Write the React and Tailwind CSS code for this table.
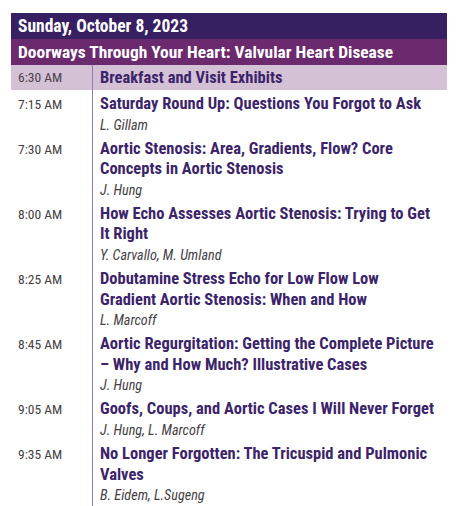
const sessions = [
  {
    time: '7:15 AM',
    title: ['Saturday Round Up: Questions You Forgot to Ask'],
    speakers: 'L. Gillam',
  },
  {
    time: '7:30 AM',
    title: ['Aortic Stenosis: Area, Gradients, Flow? Core', 'Concepts in Aortic Stenosis'],
    speakers: 'J. Hung',
  },
  {
    time: '8:00 AM',
    title: ['How Echo Assesses Aortic Stenosis: Trying to Get', 'It Right'],
    speakers: 'Y. Carvallo, M. Umland',
  },
  {
    time: '8:25 AM',
    title: ['Dobutamine Stress Echo for Low Flow Low', 'Gradient Aortic Stenosis: When and How'],
    speakers: 'L. Marcoff',
  },
  {
    time: '8:45 AM',
    title: ['Aortic Regurgitation: Getting the Complete Picture', '– Why and How Much? Illustrative Cases'],
    speakers: 'J. Hung',
  },
  {
    time: '9:05 AM',
    title: ['Goofs, Coups, and Aortic Cases I Will Never Forget'],
    speakers: 'J. Hung, L. Marcoff',
  },
  {
    time: '9:35 AM',
    title: ['No Longer Forgotten: The Tricuspid and Pulmonic', 'Valves'],
    speakers: 'B. Eidem, L.Sugeng',
  },
];

const font = { fontFamily: '"Roboto Condensed", "Liberation Sans", sans-serif' };

export default function App() {
  return (
    <div className="w-[468px] h-[506px] bg-white overflow-hidden pt-[13px] pl-[11px]" style={font}>
      <div className="w-[436px]">
        <div className="h-[26px] bg-[#372062] text-white font-bold text-[17.5px] leading-[27px] pl-[7px]">
          Sunday, October 8, 2023
        </div>
        <div className="h-[26px] bg-[#6b2a6e] text-white font-bold text-[17.4px] leading-[27px] pl-[7px]">
          Doorways Through Your Heart: Valvular Heart Disease
        </div>
        <div className="flex h-[25px] bg-[#d5c1d6]">
          <div className="w-[82px] pl-[7px] text-[13.5px] leading-[25px] text-[#4a3f4c] border-r border-[#9b7aa6]">
            6:30 AM
          </div>
          <div className="pl-[7px] font-bold text-[16.5px] leading-[25px] text-[#3b2469]">
            Breakfast and Visit Exhibits
          </div>
        </div>
        <div className="flex">
          <div className="w-[82px] border-r border-[#9b7aa6] h-[420px] shrink-0">
            {sessions.map((s, i) => (
              <div
                key={i}
                className="pl-[7px] pt-[4px] text-[13.5px] leading-[20px] text-[#444044]"
                style={{ height: `${s.title.length * 20.6 + 24}px` }}
              >
                {s.time}
              </div>
            ))}
          </div>
          <div className="pl-[7px]">
            {sessions.map((s, i) => (
              <div key={i} className="pt-[4px]" style={{ height: `${s.title.length * 20.6 + 24}px` }}>
                {s.title.map((t, j) => (
                  <div key={j} className="font-bold text-[16.5px] leading-[20.6px] text-[#3b2469] whitespace-nowrap">
                    {t}
                  </div>
                ))}
                <div className="italic text-[14.2px] leading-[20px] text-[#444044]">{s.speakers}</div>
              </div>
            ))}
          </div>
        </div>
      </div>
    </div>
  );
}
